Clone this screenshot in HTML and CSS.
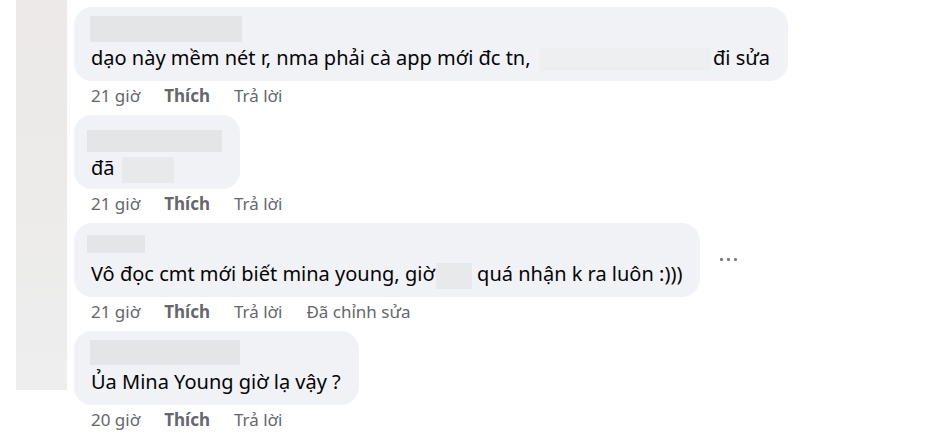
FILE: index.html
```html
<!DOCTYPE html>
<html lang="vi">
<head>
<meta charset="utf-8">
<title>Bình luận</title>
<link rel="stylesheet" href="styles.css">
</head>
<body>
<div class="page">
  <div class="strip"></div>
  <div class="thread">
    <div class="comment">
      <div class="bubble">
        <div class="name blur" style="width:152px"></div>
        <div class="text">dạo này mềm nét r, nma phải cà app mới đc tn, <span class="iblur" style="width:172px"></span> đi sửa</div>
      </div>
      <div class="meta"><span>21 giờ</span><b>Thích</b><span>Trả lời</span></div>
    </div>
    <div class="comment">
      <div class="bubble">
        <div class="name blur" style="width:135px;height:22px;margin-top:6px;margin-left:-4px"></div>
        <div class="text">đã <span class="iblur tall first" style="width:52px"></span></div>
      </div>
      <div class="meta"><span>21 giờ</span><b>Thích</b><span>Trả lời</span></div>
    </div>
    <div class="comment">
      <div class="row">
        <div class="bubble">
          <div class="name blur" style="width:58px;height:18px;margin-top:3px;margin-left:-4px;margin-bottom:5px"></div>
          <div class="text">Vô đọc cmt mới biết mina young, giờ <span class="iblur tall" style="width:36px"></span> quá nhận k ra luôn :)))</div>
        </div>
        <div class="more"><i></i><i></i><i></i></div>
      </div>
      <div class="meta"><span>21 giờ</span><b>Thích</b><span>Trả lời</span><span>Đã chỉnh sửa</span></div>
    </div>
    <div class="comment">
      <div class="bubble">
        <div class="name blur" style="width:150px;height:25px;margin-bottom:1px"></div>
        <div class="text">Ủa Mina Young giờ lạ vậy ?</div>
      </div>
      <div class="meta"><span>20 giờ</span><b>Thích</b><span>Trả lời</span></div>
    </div>
  </div>
</div>
</body>
</html>
```

FILE: styles.css
```css
html, body {
  margin: 0;
  padding: 0;
  background: #ffffff;
}
body {
  font-family: "Noto Sans", "Open Sans", sans-serif;
  color: #050505;
  width: 941px;
  height: 432px;
  overflow: hidden;
}
.page {
  display: flex;
  align-items: flex-start;
}
.strip {
  margin-left: 16px;
  width: 51px;
  height: 390px;
  flex: none;
  background: linear-gradient(180deg, #ece9e8 0%, #ecebea 50%, #eeeeee 100%);
}
.thread {
  margin-left: 7px;
  padding-top: 7px;
  display: flex;
  flex-direction: column;
}
.comment {
  display: flex;
  flex-direction: column;
  align-items: flex-start;
  height: 108px;
}
.row {
  display: flex;
  align-items: center;
}
.bubble {
  background: #f0f2f5;
  border-radius: 18px;
  padding: 9px 18px 9px 17px;
  height: 74px;
  box-sizing: border-box;
}
.name {
  height: 26px;
  margin-left: -1px;
}
.blur {
  background: #e4e5e7;
  filter: blur(0.6px);
}
.text {
  font-size: 20px;
  line-height: 31px;
  white-space: nowrap;
}
.iblur {
  display: inline-block;
  height: 23px;
  vertical-align: -6px;
  background: #eeeff1;
  margin-left: 3px;
  margin-right: -3px;
}
.iblur.tall {
  height: 26px;
  background: #e8e9eb;
  vertical-align: -8px;
  margin-left: -4px;
  margin-right: 0;
}
.iblur.tall.first {
  margin-left: 2px;
}
.more {
  display: flex;
  gap: 4px;
  margin-left: 20px;
  margin-top: -1px;
}
.more i {
  width: 3px;
  height: 3px;
  background: #7d7f84;
  border-radius: 1px;
}
.meta {
  display: flex;
  gap: 24px;
  padding-left: 17px;
  margin-top: 3px;
  font-size: 17px;
  line-height: 24px;
  color: #65676b;
}
.meta b {
  font-weight: 700;
}
```
